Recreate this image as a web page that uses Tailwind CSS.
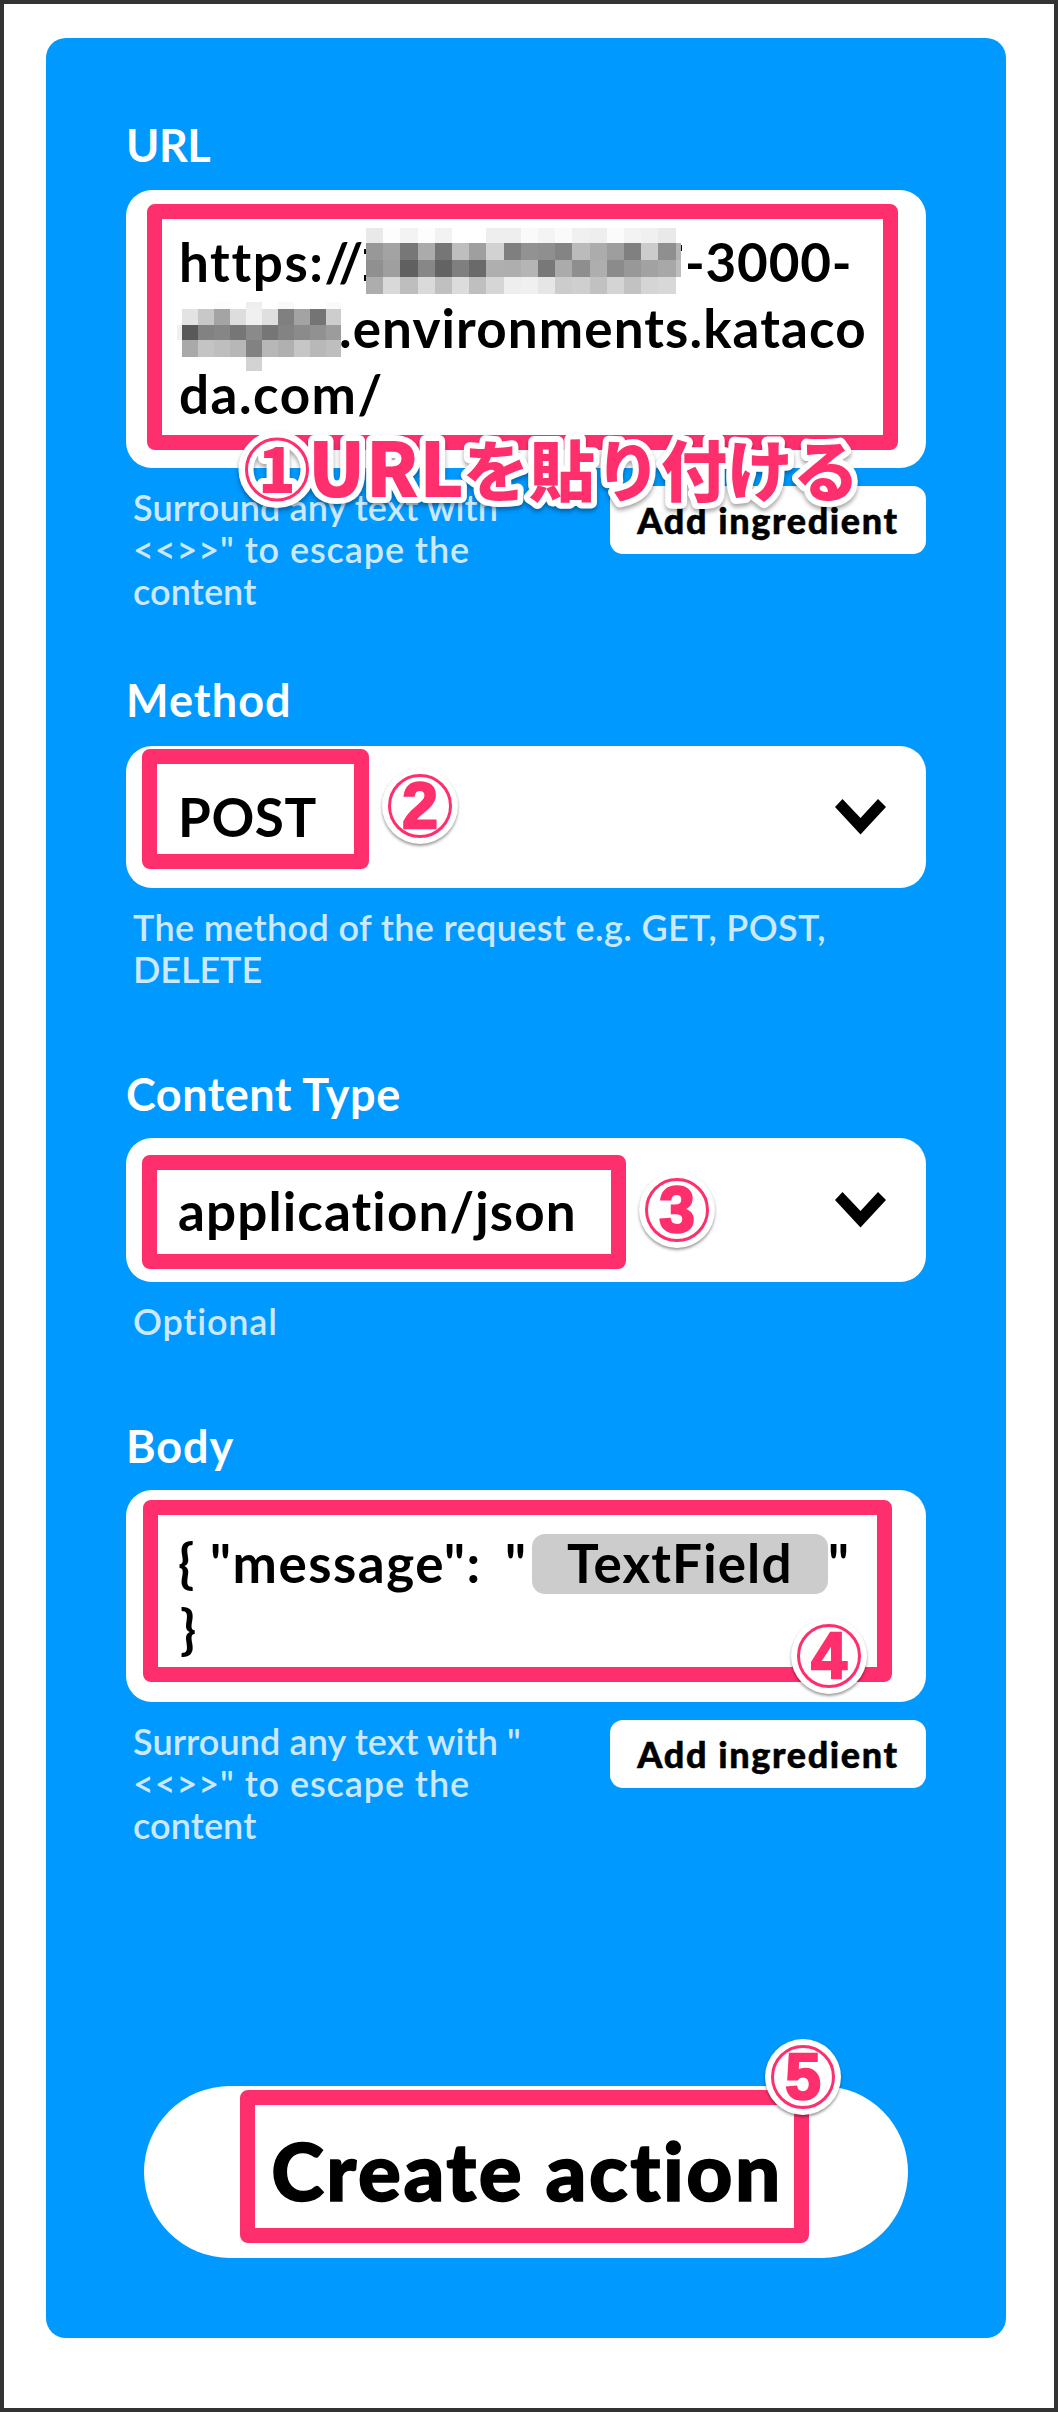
<!DOCTYPE html>
<html lang="ja">
<head>
<meta charset="utf-8">
<title>Create action</title>
<script src="https://cdn.jsdelivr.net/npm/@tailwindcss/browser@4"></script>
</head>
<body class="bg-white">
<div class="flex h-[2412px] w-[1058px] border-4 border-[#333] bg-white pl-[42px] pt-[34px] font-[Lato,sans-serif]">
  <main class="flex h-[2300px] w-[960px] flex-col rounded-[20px] bg-[#0099ff] px-20 pt-20">

    <!-- URL -->
    <section class="h-[554px]">
      <h2 class="h-[72px] text-[45px] font-bold leading-[54px] tracking-[-0.5px] text-white">URL</h2>
      <div class="relative h-[278px] rounded-[26px] bg-white pl-[53px] pt-[39px] text-[53px] font-bold leading-[66px] text-black">
        <div class="flex h-[66px] whitespace-nowrap">
          <span class="w-[185px] tracking-[1.6px]">https://</span>
          <svg id="mosaic-a" class="-mt-px h-[66px] w-[318px] shrink-0" viewBox="364 228 318 66" shape-rendering="crispEdges"></svg>
          <span class="ml-[3px] tracking-[0.8px]">-3000-</span>
        </div>
        <div class="flex h-[66px] whitespace-nowrap">
          <svg id="mosaic-b" class="-ml-0.5 mt-[7px] h-[69px] w-[164px] shrink-0" viewBox="177 302 164 69" shape-rendering="crispEdges"></svg>
          <span class="-ml-[2px] tracking-[1.1px]">.environments.kataco</span>
        </div>
        <div class="h-[66px] tracking-[1.5px]">da.com/</div>
        <div class="absolute left-[21px] top-[14px] h-[246px] w-[751px] rounded-lg border-[15px] border-[#ff2f6d]"></div>
        <!-- step 1 caption -->
        <svg class="absolute left-[104px] top-[230px] h-[100px] w-[640px] overflow-visible [filter:drop-shadow(0_3px_2px_rgb(0_0_0/0.35))]" viewBox="230 420 640 100" fill="#ff2f6d" stroke-linejoin="round">
          <circle cx="277" cy="469.500" r="31" fill="none" stroke="#fff" stroke-width="15"/>
          <g class="[paint-order:stroke]" stroke="#fff" stroke-width="12">
            <text x="277" y="493" text-anchor="middle" font-family="Noto Sans CJK JP" font-weight="900" font-size="62">1</text>
            <text x="308" y="497" font-family="Noto Sans CJK JP" font-weight="900" font-size="75" textLength="156">URL</text>
            <text x="463" y="496" font-family="Noto Sans CJK JP" font-weight="900" font-size="66" textLength="396">を貼り付ける</text>
          </g>
          <circle cx="277" cy="469.500" r="30.500" fill="none" stroke="#ff2f6d" stroke-width="3"/>
        </svg>
      </div>
      <div class="flex justify-between pt-[18px]">
        <p class="w-[420px] pl-[7px] text-[36px] font-semibold leading-[42px] tracking-[0.1px] text-[#cce8ff]">Surround any text with<br><span class="tracking-[0.9px]">&lt;&lt;&gt;&gt;" to escape the</span><br>content</p>
        <button class="h-[68px] w-[316px] rounded-[13px] bg-white text-[36px] font-black tracking-[1.6px] text-black [-webkit-text-stroke:0.5px_black]">Add ingredient</button>
      </div>
    </section>

    <!-- Method -->
    <section class="h-[394px]">
      <h2 class="h-[74px] pt-px text-[45px] font-bold leading-[54px] tracking-[1.1px] text-white">Method</h2>
      <div class="relative flex h-[142px] items-center justify-between rounded-[26px] bg-white pl-[52px] pr-10 text-[53px] font-bold text-black">
        <span class="tracking-[0.6px]">POST</span>
        <svg class="h-[36px] w-[51px]" viewBox="0 0 51 36"><path d="M0 8 7.500 0 25.500 19 43 0 51 8 25.500 35.500Z"/></svg>
        <div class="absolute left-4 top-[3px] h-[120px] w-[227px] rounded-lg border-[15px] border-[#ff2f6d]"></div>
        <div class="absolute left-[256px] top-[22px] flex size-[76px] items-center justify-center rounded-full bg-white shadow-[0_2px_3px_rgb(0_0_0/0.4)]">
          <span class="flex size-16 items-center justify-center rounded-full border-[3px] border-[#ff2f6d] font-['Liberation_Sans',sans-serif] text-[64px] font-bold leading-none text-[#ff2f6d] [-webkit-text-stroke:2.5px_#ff2f6d]">2</span>
        </div>
      </div>
      <p class="pl-[7px] pt-[18px] text-[36px] font-semibold leading-[42px] tracking-[0.36px] text-[#cce8ff]">The method of the request e.g. GET, POST,<br><span class="tracking-[-0.1px]">DELETE</span></p>
    </section>

    <!-- Content type -->
    <section class="h-[352px]">
      <h2 class="h-[72px] pt-px text-[45px] font-bold leading-[54px] tracking-[0.5px] text-white">Content Type</h2>
      <div class="relative flex h-[144px] items-center justify-between rounded-[26px] bg-white pl-[52px] pr-10 text-[53px] font-bold text-black">
        <span class="pt-px tracking-[1.1px]">application/json</span>
        <svg class="h-[36px] w-[51px]" viewBox="0 0 51 36"><path d="M0 8 7.500 0 25.500 19 43 0 51 8 25.500 35.500Z"/></svg>
        <div class="absolute left-4 top-[17px] h-[114px] w-[484px] rounded-lg border-[15px] border-[#ff2f6d]"></div>
        <div class="absolute left-[513px] top-[34px] flex size-[76px] items-center justify-center rounded-full bg-white shadow-[0_2px_3px_rgb(0_0_0/0.4)]">
          <span class="flex size-16 items-center justify-center rounded-full border-[3px] border-[#ff2f6d] font-['Liberation_Sans',sans-serif] text-[64px] font-bold leading-none text-[#ff2f6d] [-webkit-text-stroke:2.5px_#ff2f6d]">3</span>
        </div>
      </div>
      <p class="pl-[7px] pt-[18px] text-[36px] font-semibold leading-[42px] tracking-[0.8px] text-[#cce8ff]">Optional</p>
    </section>

    <!-- Body -->
    <section class="h-[668px]">
      <h2 class="h-[72px] pt-px text-[45px] font-bold leading-[54px] tracking-[0.9px] text-white">Body</h2>
      <div class="relative h-[212px] rounded-[26px] bg-white pl-[52px] pt-10 text-[53px] font-bold leading-[66px] text-black">
        <div class="flex h-[66px] whitespace-nowrap">
          <span class="w-[354px] tracking-[1.5px]">{ "message":<span class="ml-[9px]"> "</span></span>
          <span class="mt-1 h-[60px] w-[296px] rounded-[13px] bg-[#ccc] pl-[35px] leading-[58px] tracking-[1.1px]">TextField</span>
          <span>"</span>
        </div>
        <div class="pl-0.5">}</div>
        <div class="absolute left-[17px] top-[10px] h-[182px] w-[749px] rounded-lg border-[15px] border-[#ff2f6d]"></div>
        <div class="absolute left-[665px] top-[128px] flex size-[76px] items-center justify-center rounded-full bg-white shadow-[0_2px_3px_rgb(0_0_0/0.4)]">
          <span class="flex size-16 items-center justify-center rounded-full border-[3px] border-[#ff2f6d] font-['Liberation_Sans',sans-serif] text-[64px] font-bold leading-none text-[#ff2f6d] [-webkit-text-stroke:2.5px_#ff2f6d]">4</span>
        </div>
      </div>
      <div class="flex justify-between pt-[18px]">
        <p class="w-[420px] pl-[7px] text-[36px] font-semibold leading-[42px] tracking-[0.1px] text-[#cce8ff]">Surround any text with "<br><span class="tracking-[0.9px]">&lt;&lt;&gt;&gt;" to escape the</span><br>content</p>
        <button class="h-[68px] w-[316px] rounded-[13px] bg-white text-[36px] font-black tracking-[1.6px] text-black [-webkit-text-stroke:0.5px_black]">Add ingredient</button>
      </div>
    </section>

    <!-- Submit -->
    <div class="relative ml-[18px] h-[172px] w-[764px]">
      <button class="h-[172px] w-[764px] rounded-full bg-white pb-1 pl-0.5 text-[80px] font-black leading-[168px] tracking-[2.5px] text-black [-webkit-text-stroke:1.5px_black]">Create action</button>
      <div class="absolute left-24 top-1 h-[153px] w-[569px] rounded-lg border-[15px] border-[#ff2f6d]"></div>
      <div class="absolute left-[621px] top-[-47px] flex size-[76px] items-center justify-center rounded-full bg-white shadow-[0_2px_3px_rgb(0_0_0/0.4)]">
        <span class="flex size-16 items-center justify-center rounded-full border-[3px] border-[#ff2f6d] font-['Liberation_Sans',sans-serif] text-[64px] font-bold leading-none text-[#ff2f6d] [-webkit-text-stroke:2.5px_#ff2f6d]">5</span>
      </div>
    </div>
  </main>
</div>
<script>
// Pixelated blocks that hide the private parts of the URL; grey level per cell.
function mosaic(id, x0, cell, ys, rows, extra) {
  let out = extra;
  rows.forEach((row, r) => row.split(' ').forEach((g, c) => {
    if (g === 'ff') return;
    const x = Math.round(x0 + c * cell), x2 = Math.round(x0 + (c + 1) * cell);
    out += `<rect x="${x}" y="${ys[r]}" width="${x2 - x}" height="${ys[r + 1] - ys[r]}" fill="#${g + g + g}"/>`;
  }));
  document.getElementById(id).innerHTML = out;
}
mosaic('mosaic-a', 366, 17.2, [228, 243, 260, 277, 294], [
  'e9 fd f3 fd f2 ff ff ee ee fa f4 fa f0 ee fb f3 f0 e9',
  '98 a3 77 ab 76 be 9f d2 7f 92 8f 84 bb ac 9e 80 cc 8f',
  '90 9f 60 87 63 7f 6a af ae b5 78 ab 8e ae 8b 98 a2 a8',
  'ad d9 be da c0 dc bf d6 ee f0 e6 cc cf c1 d4 c2 d5 d8'
], '<rect x="364" y="249" width="3" height="5"/><rect x="364" y="275" width="3" height="6"/><rect x="676" y="243" width="5" height="17" fill="#b4b4b4"/><rect x="676" y="260" width="5" height="17" fill="#bebebe"/><rect x="681" y="245" width="1" height="6"/>');
mosaic('mosaic-b', 182, 16, [302, 309, 325, 340, 357, 371], [
  'ff ff fc ff ee ff f9 ff ff fa',
  'e3 c8 a4 dd f0 df 80 a3 74 cd',
  '59 82 86 76 8a 76 83 8b 91 9c',
  'a9 c4 be b7 82 b7 b0 c6 b8 be',
  'ff ff ff ff d3'
], '<rect x="177" y="325" width="5" height="15" fill="#f0f0f0"/>');
</script>
</body>
</html>
